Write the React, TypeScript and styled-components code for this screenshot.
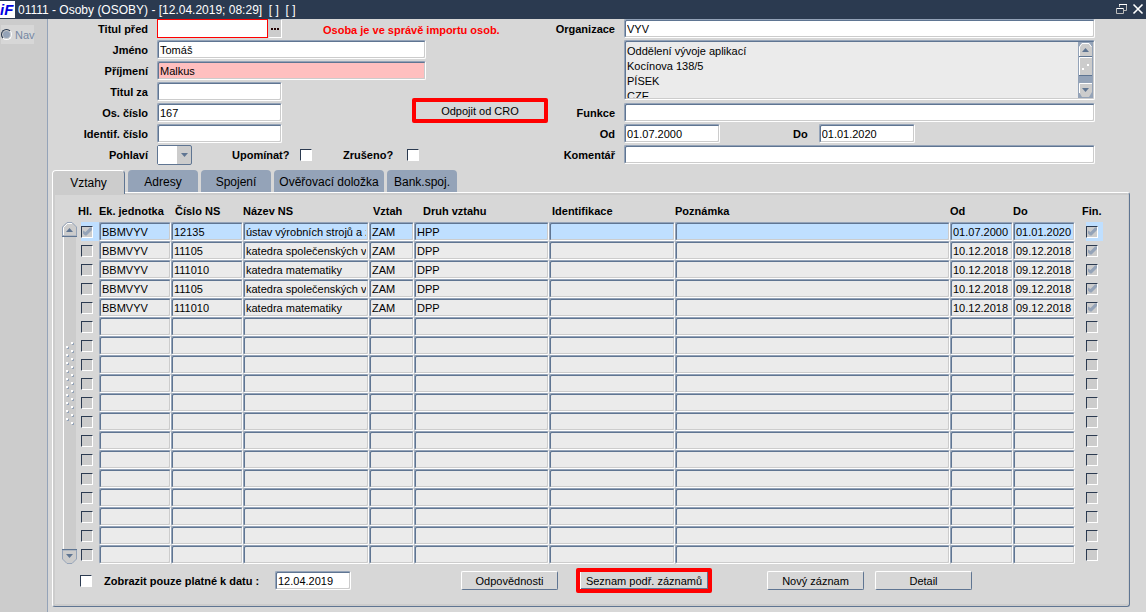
import React from "react";
import styled, { createGlobalStyle, css } from "styled-components";

const c = {
  navy: "#2b3a50",
  steel: "#5f7592",
  mist: "#94a3b8",
  page: "#d7d7d7",
  shade: "#cccccc",
  cell: "#ebebeb",
  active: "#bfdfff",
  required: "#ffbfbf",
  red: "#ff0000",
};

const GlobalStyle = createGlobalStyle`
  * { box-sizing: border-box; }
  body { margin: 0; background: ${c.page}; }
  body, button, input, select, textarea {
    font-family: "Liberation Sans", Arial, sans-serif;
    font-size: 11px;
    color: #000;
  }
`;

const Page = styled.div`
  min-height: 100vh;
  display: flex;
  flex-direction: column;
  background: ${c.page};
`;

const TitleBar = styled.header`
  display: flex;
  align-items: center;
  height: 19px;
  background: ${c.navy};
  color: #fff;
`;

const Title = styled.h1`
  flex: 1;
  margin: 0 0 0 2px;
  font-size: 12px;
  line-height: 18px;
  font-weight: normal;
  white-space: pre;
`;

const WindowButton = styled.button`
  display: flex;
  width: 16px;
  height: 18px;
  padding: 2px;
  border: 0;
  background: none;
`;

const Body = styled.div`
  flex: 1;
  display: flex;
`;

const Sidebar = styled.nav`
  width: 48px;
  flex: none;
  padding-top: 6px;
  background: ${c.shade};
  border-right: 1px solid ${c.mist};
`;

const NavOption = styled.label`
  display: flex;
  align-items: center;
  gap: 3px;
  width: 33px;
  height: 19px;
  margin-left: 1px;
  background: ${c.page};
  color: #7587a3;
  font-size: 11px;
`;

const Radio = styled.input`
  appearance: none;
  flex: none;
  width: 11px;
  height: 11px;
  margin: 0;
  border: 1px solid;
  border-color: ${c.navy} #fff #fff ${c.navy};
  border-radius: 50%;
  background: ${c.mist};
  box-shadow: inset 0 0 0 1px ${c.shade};
`;

const Main = styled.main`
  flex: 1;
  min-width: 0;
  padding: 0 16px 5px 4px;
`;

const Forms = styled.div`
  display: flex;
  padding-right: 35px;
`;

const FormGrid = styled.div<{ $columns: string }>`
  display: grid;
  grid-template-columns: ${(p) => p.$columns};
  grid-auto-rows: 21px;
  align-items: start;
`;

const LeftForm = styled(FormGrid)`
  flex: none;
  width: 496px;
`;

const RightForm = styled(FormGrid)`
  flex: 1;
`;

const Label = styled.label`
  font-weight: bold;
  line-height: 20px;
  white-space: nowrap;
`;

const FieldLabel = styled(Label)`
  justify-self: end;
  padding-right: 9px;
`;

const sunken = css`
  border: 1px solid;
  border-color: ${c.mist} #fff #fff ${c.mist};
  border-radius: 2px;
  box-shadow: inset 1px 1px ${c.steel}, inset -1px -1px ${c.shade};
`;

const TextInput = styled.input<{ $width?: number; $span?: boolean; $required?: boolean }>`
  ${sunken}
  width: ${(p) => (p.$width ? `${p.$width}px` : "100%")};
  height: 19px;
  padding: 0 2px;
  outline: 0;
  background: ${(p) => (p.$required ? c.required : "#fff")};
  ${(p) => p.$span && "grid-column: span 2;"}
`;

const LookupGroup = styled.div`
  display: flex;
`;

const FocusedInput = styled.input`
  width: 111px;
  height: 19px;
  padding: 0 3px;
  border: 1px solid ${c.red};
  outline: 0;
  background: #fff;
`;

const LookupButton = styled.button`
  display: flex;
  justify-content: center;
  width: 14px;
  height: 19px;
  padding: 8px 0 0;
  border: 1px solid;
  border-color: ${c.mist} #fff #fff ${c.shade};
  background: ${c.shade};
`;

const Warning = styled.p`
  margin: 0 0 0 41px;
  color: ${c.red};
  font-weight: bold;
  line-height: 22px;
  white-space: nowrap;
`;

const raised = css`
  height: 19px;
  padding: 0;
  border: 1px solid;
  border-color: #fff ${c.steel} ${c.steel} #fff;
  border-radius: 2px;
  background: ${c.page};
`;

const Button = styled.button<{ $indent: number }>`
  ${raised}
  width: 97px;
  margin-left: ${(p) => p.$indent}px;
`;

const MarkedButton = styled.button<{ $indent: number }>`
  width: 136px;
  height: 25px;
  padding: 0;
  margin-left: ${(p) => p.$indent}px;
  border: 4px solid ${c.red};
  border-radius: 2px;
  background: ${c.page};
`;

const DetachButton = styled(MarkedButton)`
  grid-column: 3;
  grid-row: 4 / 6;
  align-self: end;
  justify-self: end;
  margin-bottom: 1px;
`;

const ListButton = styled(MarkedButton)`
  box-shadow: inset 1px 0 #fff, inset -1px -1px ${c.steel};
`;

const Choices = styled.div`
  grid-column: 2 / 4;
  display: flex;
  align-items: center;
  height: 20px;
`;

const SelectBox = styled.span`
  display: flex;
  width: 35px;
  height: 20px;
  margin-right: 40px;
  border: 1px solid ${c.steel};
  border-radius: 2px;
  background: linear-gradient(to right, #fff 19px, ${c.shade} 19px);
`;

const Select = styled.select`
  appearance: none;
  width: 18px;
  border: 0;
  outline: 0;
  background: #fff;
`;

const Caret = styled.svg`
  margin: 7px 0 0 4px;
`;

const Check = styled.input<{ $locked?: boolean }>`
  appearance: none;
  flex: none;
  display: block;
  width: 12px;
  height: 12px;
  margin: 0;
  border: 1px solid;
  border-color: ${c.navy} #fff #fff ${c.navy};
  background: ${(p) => (p.$locked ? c.shade : "#fff")};
  &:checked::after {
    content: "";
    display: block;
    width: 10px;
    height: 10px;
    background: ${c.mist};
    clip-path: polygon(10% 40%, 35% 55%, 80% 10%, 100% 10%, 100% 35%, 45% 90%, 30% 90%, 10% 70%);
  }
`;

const ChoiceLabel = styled(Label)<{ $width: number }>`
  display: flex;
  align-items: center;
  justify-content: space-between;
  width: ${(p) => p.$width}px;
  margin-right: 31px;
`;

const AddressBox = styled.div`
  ${sunken}
  grid-row: span 3;
  display: flex;
  height: 60px;
  padding: 1px;
  background: ${c.cell};
`;

const Address = styled.textarea`
  flex: 1;
  padding: 2px 1px 0;
  border: 0;
  outline: 0;
  resize: none;
  overflow: hidden;
  background: transparent;
  line-height: 15px;
`;

const Dates = styled.div`
  display: flex;
`;

const DateLabel = styled(Label)`
  margin: 0 11px 0 73px;
`;

const Tabs = styled.div`
  display: flex;
  align-items: flex-start;
  gap: 3px;
  height: 22px;
  margin-top: 4px;
`;

const Tab = styled.button<{ $width: number; $selected?: boolean }>`
  position: relative;
  width: ${(p) => p.$width}px;
  height: 22px;
  padding: 2px 0 0;
  border: 0;
  border-radius: 4px 4px 0 0;
  background: ${c.mist};
  font-size: 12px;
  white-space: nowrap;
  ${(p) =>
    p.$selected &&
    css`
      height: 24px;
      padding: 0;
      border: 1px solid #fff;
      border-right-color: ${c.steel};
      border-bottom: 0;
      background: ${c.shade};
    `}
`;

const Panel = styled.section`
  height: 415px;
  padding: 11px 8px 0 9px;
  border: 1px solid;
  border-color: #fff ${c.steel} ${c.steel} #fff;
  border-radius: 0 3px 3px 3px;
  box-shadow: inset 2px 2px ${c.shade}, inset -1px -2px ${c.shade};
`;

const Records = styled.div`
  display: flex;
  gap: 1px;
  padding-right: 18px;
`;

const Scroller = styled.div`
  flex: none;
  width: 15px;
  margin-top: 18px;
`;

const Table = styled.table`
  flex: 1;
  width: 100%;
  table-layout: fixed;
  border-collapse: collapse;
`;

const Col = styled.col<{ $width?: number }>`
  ${(p) => p.$width && `width: ${p.$width}px;`}
`;

const Head = styled.th<{ $pad?: number }>`
  height: 18px;
  padding: 0 0 4px ${(p) => p.$pad ?? 0}px;
  text-align: left;
  line-height: 14px;
  white-space: nowrap;
`;

const Cell = styled.td`
  padding: 0;
  height: 19px;
`;

const CheckCell = styled(Cell)<{ $pad: number; $active?: boolean }>`
  padding-left: ${(p) => p.$pad}px;
  background: ${(p) => (p.$active ? c.active : "transparent")};
  background-clip: content-box;
`;

const CellInput = styled.input<{ $active?: boolean }>`
  ${sunken}
  display: block;
  width: 100%;
  height: 19px;
  padding: 0 2px;
  outline: 0;
  background: ${(p) => (p.$active ? c.active : c.cell)};
`;

const Footer = styled.div`
  display: flex;
  align-items: center;
  height: 25px;
  margin: 4px 0 0 18px;
`;

const FooterLabel = styled(Label)`
  display: flex;
  align-items: center;
  gap: 12px;
  width: 195px;
`;

const Logo = () => (
  <svg width="16" height="18" viewBox="0 0 16 18" aria-label="iF">
    <rect width="15" height="17" fill="#fff" />
    <text
      x="0"
      y="14"
      fontFamily="Liberation Sans"
      fontSize="15"
      fontWeight="bold"
      fontStyle="italic"
      fill="#0000e0"
    >
      iF
    </text>
  </svg>
);

const ArrowBadge = ({ up }: { up?: boolean }) => (
  <svg width="15" height="15" viewBox="0 0 15 15" display="block">
    <g transform={up ? undefined : "rotate(180 7.5 7.5)"}>
      <path d="M0.5 14V5L5 0.5H10L14.5 5V14Z" fill={c.shade} stroke={c.mist} />
      <path d="M1.5 13V5.5L5.5 1.5H10" fill="none" stroke={up ? "#fff" : c.shade} />
      <path d="M0 14.5H15" stroke={c.steel} />
      <path d="M4 10H11L7.5 6Z" fill={c.steel} />
    </g>
  </svg>
);

const grip = Array.from({ length: 21 }, (_, i) => ({ x: i % 2 ? 4 : 9, y: i * 4 }));

const TableScroller = () => (
  <Scroller>
    <ArrowBadge up />
    <svg width="15" height="312" viewBox="0 0 15 312" display="block">
      <rect x="1" width="13" height="312" fill={c.shade} />
      <path d="M1.5 0V312" stroke="#fff" />
      {grip.map((d) => (
        <g key={d.y}>
          <rect x={d.x + 1} y={106 + d.y} width="2" height="2" fill={c.mist} />
          <rect x={d.x} y={105 + d.y} width="2" height="2" fill="#fff" />
        </g>
      ))}
    </svg>
    <ArrowBadge />
  </Scroller>
);

const AddressScroller = () => (
  <svg width="15" height="56" viewBox="0 0 15 56">
    <rect width="15" height="56" fill={c.mist} />
    <path d="M1 14V5L4 1H11L14 5V14Z" fill={c.shade} />
    <path d="M1.500 14V5L4 1.500H11L13.500 5" fill="none" stroke="#fff" />
    <path d="M4 10H11L7.500 6Z" fill={c.steel} />
    <rect x="1" y="14" width="13" height="1" fill={c.steel} />
    <rect x="1" y="15" width="13" height="18" fill={c.shade} />
    <path d="M1.500 33V15.500H14" fill="none" stroke="#fff" />
    <rect x="1" y="33" width="13" height="1" fill={c.steel} />
    <rect x="4" y="26" width="2" height="2" fill="#fff" />
    <rect x="9" y="22" width="2" height="2" fill="#fff" />
    <path d="M1 41H14V50L11 55H4L1 50Z" fill={c.shade} />
    <path d="M1.500 51V41.500H14" fill="none" stroke="#fff" />
    <path d="M4 46H11L7.500 50Z" fill={c.steel} />
  </svg>
);

type Row = { hl?: boolean; fin?: boolean; values: string[] };

const society = "katedra společenských věd";
const maths = "katedra matematiky";
const dpp = (code: string, name: string): Row => ({
  fin: true,
  values: ["BBMVYV", code, name, "ZAM", "DPP", "", "", "10.12.2018", "09.12.2018"],
});

const rows: Row[] = [
  {
    hl: true,
    fin: true,
    values: ["BBMVYV", "12135", "ústav výrobních strojů a zařízení", "ZAM", "HPP", "", "", "01.07.2000", "01.01.2020"],
  },
  dpp("11105", society),
  dpp("111010", maths),
  dpp("11105", society),
  dpp("111010", maths),
  ...Array.from({ length: 13 }, (): Row => ({ values: Array(9).fill("") })),
];

const columns: { title: string; width?: number; pad?: number }[] = [
  { title: "Ek. jednotka", width: 72 },
  { title: "Číslo NS", width: 72, pad: 4 },
  { title: "Název NS", width: 126 },
  { title: "Vztah", width: 45, pad: 4 },
  { title: "Druh vztahu", width: 135, pad: 9 },
  { title: "Identifikace", width: 126, pad: 3 },
  { title: "Poznámka" },
  { title: "Od", width: 63 },
  { title: "Do", width: 62 },
];

const tabs = [
  { title: "Vztahy", width: 73 },
  { title: "Adresy", width: 70 },
  { title: "Spojení", width: 70 },
  { title: "Ověřovací doložka", width: 110 },
  { title: "Bank.spoj.", width: 70 },
];

export default function App() {
  return (
    <Page>
      <GlobalStyle />
      <TitleBar>
        <Logo />
        <Title>01111 - Osoby (OSOBY) - [12.04.2019; 08:29]  [ ]  [ ]</Title>
        <WindowButton aria-label="Obnovit">
          <svg width="12" height="12" viewBox="0 0 12 12" fill="none">
            <path d="M3.500 4V1.500H10.500V7.500H8" stroke="#bbb" />
            <path d="M3 1.500H11M0 5.500H8" stroke="#fff" />
            <path d="M0.500 5V10.500H7.500V5" stroke="#bbb" />
          </svg>
        </WindowButton>
        <WindowButton aria-label="Zavřít">
          <svg width="12" height="12" viewBox="0 0 12 12">
            <path d="M1.500 1.500L10.500 10.500M10.500 1.500L1.500 10.500" stroke="#fff" strokeWidth="1.600" />
          </svg>
        </WindowButton>
      </TitleBar>
      <Body>
        <Sidebar>
          <NavOption>
            <Radio type="radio" name="nav" />
            Nav
          </NavOption>
        </Sidebar>
        <Main>
          <Forms>
            <LeftForm $columns="105px 125px 1fr">
              <FieldLabel htmlFor="before">Titul před</FieldLabel>
              <LookupGroup>
                <FocusedInput id="before" />
                <LookupButton aria-label="Seznam titulů">
                  <svg width="8" height="2" viewBox="0 0 8 2">
                    <path d="M0 0H2V2H0ZM3 0H5V2H3ZM6 0H8V2H6Z" fill="#200" />
                  </svg>
                </LookupButton>
              </LookupGroup>
              <Warning>Osoba je ve správě importu osob.</Warning>
              <FieldLabel htmlFor="first">Jméno</FieldLabel>
              <TextInput id="first" $span $width={269} defaultValue="Tomáš" />
              <FieldLabel htmlFor="last">Příjmení</FieldLabel>
              <TextInput id="last" $span $width={269} $required defaultValue="Malkus" />
              <FieldLabel htmlFor="after">Titul za</FieldLabel>
              <TextInput id="after" />
              <DetachButton $indent={0}>Odpojit od CRO</DetachButton>
              <FieldLabel htmlFor="number">Os. číslo</FieldLabel>
              <TextInput id="number" defaultValue="167" />
              <FieldLabel htmlFor="ident">Identif. číslo</FieldLabel>
              <TextInput id="ident" />
              <span />
              <FieldLabel htmlFor="sex">Pohlaví</FieldLabel>
              <Choices>
                <SelectBox>
                  <Select id="sex">
                    <option value="" />
                  </Select>
                  <Caret width="9" height="5" viewBox="0 0 9 5">
                    <path d="M1 0H8L4.500 4Z" fill={c.steel} />
                  </Caret>
                </SelectBox>
                <ChoiceLabel $width={80}>
                  Upomínat?
                  <Check type="checkbox" />
                </ChoiceLabel>
                <ChoiceLabel $width={76}>
                  Zrušeno?
                  <Check type="checkbox" />
                </ChoiceLabel>
              </Choices>
            </LeftForm>
            <RightForm $columns="76px 1fr">
              <FieldLabel htmlFor="org">Organizace</FieldLabel>
              <TextInput id="org" defaultValue="VYV" />
              <span />
              <AddressBox>
                <Address
                  readOnly
                  aria-label="Adresa organizace"
                  value={"Oddělení vývoje aplikací\nKocínova 138/5\nPÍSEK\nCZE"}
                />
                <AddressScroller />
              </AddressBox>
              <span />
              <span />
              <FieldLabel htmlFor="role">Funkce</FieldLabel>
              <TextInput id="role" />
              <FieldLabel htmlFor="from">Od</FieldLabel>
              <Dates>
                <TextInput id="from" $width={96} defaultValue="01.07.2000" />
                <DateLabel htmlFor="to">Do</DateLabel>
                <TextInput id="to" $width={96} defaultValue="01.01.2020" />
              </Dates>
              <FieldLabel htmlFor="note">Komentář</FieldLabel>
              <TextInput id="note" />
            </RightForm>
          </Forms>

          <Tabs role="tablist">
            {tabs.map((t, i) => (
              <Tab key={t.title} role="tab" aria-selected={i === 0} $width={t.width} $selected={i === 0}>
                {t.title}
              </Tab>
            ))}
          </Tabs>
          <Panel>
            <Records>
              <TableScroller />
              <Table>
                <colgroup>
                  <Col $width={21} />
                  {columns.map((col) => (
                    <Col key={col.title} $width={col.width} />
                  ))}
                  <Col $width={28} />
                </colgroup>
                <thead>
                  <tr>
                    <Head>Hl.</Head>
                    {columns.map((col) => (
                      <Head key={col.title} $pad={col.pad}>
                        {col.title}
                      </Head>
                    ))}
                    <Head $pad={7}>Fin.</Head>
                  </tr>
                </thead>
                <tbody>
                  {rows.map((row, r) => (
                    <tr key={r}>
                      <CheckCell $pad={3} $active={r === 0}>
                        <Check type="checkbox" aria-label="Hlavní" $locked checked={!!row.hl} readOnly />
                      </CheckCell>
                      {row.values.map((value, i) => (
                        <Cell key={i}>
                          <CellInput aria-label={columns[i].title} readOnly value={value} $active={r === 0} />
                        </Cell>
                      ))}
                      <CheckCell $pad={11} $active={r === 0}>
                        <Check type="checkbox" aria-label="Finanční" $locked checked={!!row.fin} readOnly />
                      </CheckCell>
                    </tr>
                  ))}
                </tbody>
              </Table>
            </Records>
            <Footer>
              <FooterLabel>
                <Check type="checkbox" />
                Zobrazit pouze platné k datu :
              </FooterLabel>
              <TextInput aria-label="Datum platnosti" $width={76} defaultValue="12.04.2019" />
              <Button $indent={110}>Odpovědnosti</Button>
              <ListButton $indent={18}>Seznam podř. záznamů</ListButton>
              <Button $indent={55}>Nový záznam</Button>
              <Button $indent={11}>Detail</Button>
            </Footer>
          </Panel>
        </Main>
      </Body>
    </Page>
  );
}
